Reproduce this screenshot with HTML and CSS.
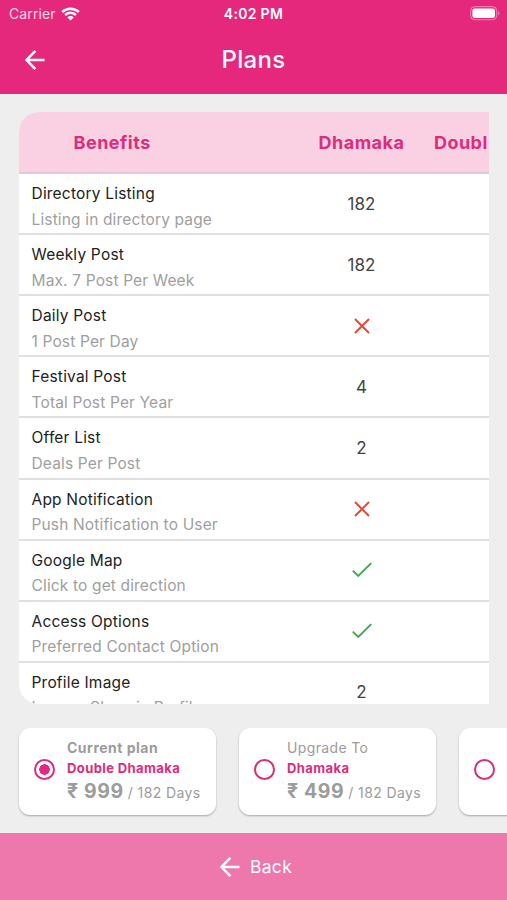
FILE: index.html
```html
<!DOCTYPE html>
<html lang="en">
<head>
<meta charset="utf-8">
<title>Plans</title>
<link rel="stylesheet" href="styles.css">
</head>
<body>
<header class="top">
  <div class="status">
    <div class="carrier"><span>Carrier</span>
      <svg class="wifi" width="19" height="14" viewBox="0 0 19 14"><path d="M1.2 5a12 12 0 0 1 16.6 0M4.1 8a7.8 7.8 0 0 1 10.8 0" fill="none" stroke="#fff" stroke-width="2.5"/><path d="M9.5 13.6 6.3 10.4a4.6 4.6 0 0 1 6.4 0z" fill="#fff"/></svg>
    </div>
    <span class="time">4:02 PM</span>
    <svg class="battery" width="31" height="15" viewBox="0 0 31 15"><rect x=".7" y=".7" width="26" height="13" rx="4" fill="none" stroke="#fff" stroke-opacity=".45"/><rect x="2.4" y="2.4" width="22.6" height="9.6" rx="2.3" fill="#fff"/><path d="M28.3 5q2 2.2 0 4.400z" fill="#fff" fill-opacity=".55"/></svg>
  </div>
  <div class="bar">
    <svg class="arrow" width="20" height="20" viewBox="0 0 20 20"><path d="M19.500 10H1.600M10.400 .8 1.400 10l9 9.200"/></svg>
    <h1>Plans</h1>
  </div>
</header>
<main>
  <section class="table">
    <div class="row head"><div class="benefit">Benefits</div><div class="plan">Dhamaka</div><div class="plan next">Double Dhamaka</div></div>
    <div class="row"><div class="benefit"><b>Directory Listing</b><small>Listing in directory page</small></div><div class="plan">182</div></div>
    <div class="row"><div class="benefit"><b>Weekly Post</b><small>Max. 7 Post Per Week</small></div><div class="plan">182</div></div>
    <div class="row"><div class="benefit"><b>Daily Post</b><small>1 Post Per Day</small></div><div class="plan"><svg class="no" width="16" height="16" viewBox="0 0 16 16"><path d="M1 1l14 14M15 1 1 15"/></svg></div></div>
    <div class="row"><div class="benefit"><b>Festival Post</b><small>Total Post Per Year</small></div><div class="plan">4</div></div>
    <div class="row"><div class="benefit"><b>Offer List</b><small>Deals Per Post</small></div><div class="plan">2</div></div>
    <div class="row"><div class="benefit"><b>App Notification</b><small>Push Notification to User</small></div><div class="plan"><svg class="no" width="16" height="16" viewBox="0 0 16 16"><path d="M1 1l14 14M15 1 1 15"/></svg></div></div>
    <div class="row"><div class="benefit"><b>Google Map</b><small>Click to get direction</small></div><div class="plan"><svg class="yes" width="20" height="16" viewBox="0 0 20 16"><path d="M.8 8.600 6.300 14 19.200 1.200"/></svg></div></div>
    <div class="row"><div class="benefit"><b>Access Options</b><small>Preferred Contact Option</small></div><div class="plan"><svg class="yes" width="20" height="16" viewBox="0 0 20 16"><path d="M.8 8.600 6.300 14 19.200 1.200"/></svg></div></div>
    <div class="row"><div class="benefit"><b>Profile Image</b><small>Images Show in Profile</small></div><div class="plan">2</div></div>
  </section>
  <section class="cards">
    <div class="card current"><span class="radio on"></span><div class="info"><div class="label">Current plan</div><div class="name">Double Dhamaka</div><div class="price"><strong>₹ 999</strong><span>/ 182 Days</span></div></div></div>
    <div class="card"><span class="radio"></span><div class="info"><div class="label">Upgrade To</div><div class="name">Dhamaka</div><div class="price"><strong>₹ 499</strong><span>/ 182 Days</span></div></div></div>
    <div class="card"><span class="radio"></span></div>
  </section>
</main>
<footer class="back"><svg class="arrow" width="20" height="20" viewBox="0 0 20 20"><path d="M19.500 10H1.600M10.400 .8 1.400 10l9 9.200"/></svg><span>Back</span></footer>
</body>
</html>
```
FILE: styles.css
```css
* { box-sizing: border-box; }
body { margin: 0; width: 507px; height: 900px; overflow: hidden; display: flex; flex-direction: column; background: #eee; font-family: Inter, "Liberation Sans", sans-serif; }
svg { display: block; flex: none; }
.top { height: 93.500px; background: #e6287c; color: #fff; }
.status { height: 27px; display: grid; grid-template-columns: 1fr auto 1fr; align-items: center; padding: 0 6px 0 9px; font-size: 14px; }
.carrier { display: flex; align-items: center; gap: 6px; color: #ffd9ea; letter-spacing: .1px; }
.wifi { margin-left: -1px; }
.time { font-weight: 600; letter-spacing: .3px; margin-left: -3px; }
.battery { justify-self: end; }
.bar { height: 65px; display: grid; grid-template-columns: 20px 1fr 20px; align-items: center; padding: 0 25px; }
h1 { margin: 0; text-align: center; font-size: 24px; font-weight: 500; letter-spacing: .3px; }
.arrow path { fill: none; stroke: #fff; stroke-width: 2.500; }
main { height: 739.500px; padding: 18.500px 0 0 19px; }
.table { width: 470px; height: 592px; overflow: hidden; border-radius: 20px 0 0 20px; background: #fff; }
.row { width: 470px; height: 61.120px; display: grid; grid-template-columns: 288px 109px 71px; align-items: center; border-bottom: 2px solid #e0dfe0; }
.row.head { height: 62px; background: #f9d1e3; border-color: #dfcad5; color: #de2c7b; font-size: 18px; font-weight: 700; letter-spacing: .5px; }
.row.head .benefit { padding: 0 0 0 54.500px; }
.benefit { padding: 6px 0 0 12.500px; }
.benefit b, .benefit small { display: block; font-weight: 400; line-height: 25.500px; white-space: nowrap; font-size: 15.500px; }
.benefit b { color: #222; letter-spacing: .2px; }
.benefit small { color: #a0a0a0; letter-spacing: .15px; }
.plan { display: grid; justify-items: center; color: #444; font-size: 17px; }
.head .plan { color: inherit; font-size: 18px; }
.head .next { justify-items: start; padding-left: 18px; overflow: hidden; white-space: nowrap; letter-spacing: .45px; }
.no path, .yes path { fill: none; stroke: #ea4335; stroke-width: 1.900; }
.yes path { stroke: #43a653; }
.cards { display: flex; gap: 23px; margin: 24px 0 0 -3px; overflow: hidden; padding: 0 0 6px 2.500px; }
.card { width: 197px; height: 87px; flex: none; border-radius: 11px; background: #fff; box-shadow: 0 1px 2px rgba(0,0,0,.3); display: flex; align-items: center; padding: 0 0 5px 15.500px; }
.radio { width: 21px; height: 21px; flex: none; border: 2px solid #de2c7b; border-radius: 50%; }
.on { background: radial-gradient(circle, #e7287e 0 5px, #fff 5.500px); }
.info { margin: 6px 0 0 12px; color: #9c9c9c; white-space: nowrap; }
.label { font-size: 14px; line-height: 20px; letter-spacing: .35px; }
.current .label { font-weight: 700; letter-spacing: .5px; }
.name { color: #de2c7b; font-size: 13px; font-weight: 700; line-height: 20px; letter-spacing: .4px; }
.price { display: flex; align-items: baseline; gap: 4px; line-height: 26px; font-size: 14px; letter-spacing: .4px; }
.price strong { font-size: 19.500px; font-weight: 700; letter-spacing: .6px; }
.back { height: 67px; background: #ee77ac; display: flex; align-items: center; justify-content: center; gap: 10px; padding-left: 5px; color: #fff; font-size: 17.500px; letter-spacing: .3px; }
```
